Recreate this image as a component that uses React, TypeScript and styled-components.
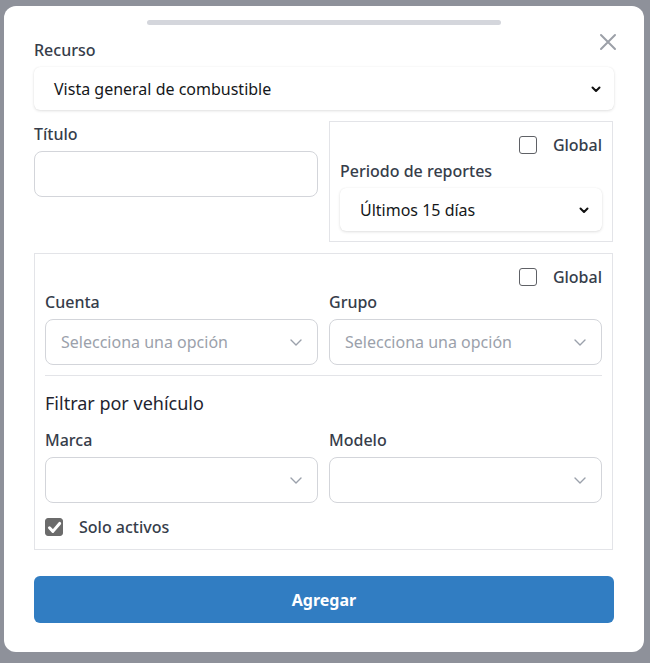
import React, { useState } from 'react';
import styled, { createGlobalStyle } from 'styled-components';

const GlobalStyle = createGlobalStyle`
  html, body {
    margin: 0;
    padding: 0;
    background: #8e919a;
    font-family: 'Noto Sans', 'Open Sans', Arial, sans-serif;
  }
  * {
    box-sizing: border-box;
  }
`;

const Backdrop = styled.div`
  min-height: 663px;
  padding: 6px 0 0 4px;
`;

const Modal = styled.div`
  position: relative;
  width: 640px;
  height: 646px;
  background: #ffffff;
  border-radius: 12px;
  padding: 14px 30px 30px;
  display: flex;
  flex-direction: column;
`;

const Handle = styled.div`
  width: 354px;
  height: 5px;
  flex-shrink: 0;
  border-radius: 3px;
  background: #d4d6dc;
  margin: 0 auto;
`;

const CloseButton = styled.button`
  position: absolute;
  top: 26px;
  right: 26px;
  width: 20px;
  height: 20px;
  padding: 0;
  border: none;
  background: none;
  cursor: pointer;
  display: flex;
  align-items: center;
  justify-content: center;
`;

const Label = styled.div<{ $top?: number }>`
  font-size: 16px;
  line-height: 24px;
  font-weight: 500;
  color: #363d4a;
  margin-top: ${(p) => p.$top ?? 0}px;
`;

const PlainSelect = styled.div`
  height: 43px;
  flex-shrink: 0;
  margin-top: 5px;
  padding: 0 12px 0 20px;
  border-radius: 6px;
  background: #fff;
  box-shadow: 0 1px 3px rgba(0, 0, 0, 0.12), 0 0 1px rgba(0, 0, 0, 0.08);
  display: flex;
  align-items: center;
  justify-content: space-between;
  font-size: 16px;
  color: #15171a;
`;

const Row = styled.div<{ $top: number }>`
  display: grid;
  grid-template-columns: 284px 1fr;
  column-gap: 11px;
  margin-top: ${(p) => p.$top}px;
`;

const InnerRow = styled.div<{ $top: number }>`
  display: grid;
  grid-template-columns: 1fr 1fr;
  column-gap: 11px;
  margin-top: ${(p) => p.$top}px;
`;

const Column = styled.div`
  display: flex;
  flex-direction: column;
`;

const TextInput = styled.input`
  height: 46px;
  margin-top: 5px;
  border: 1px solid #d3d5da;
  border-radius: 8px;
  padding: 0 14px;
  font-family: inherit;
  font-size: 16px;
  outline: none;
`;

const Box = styled.div<{ $top?: number }>`
  border: 1px solid #e3e4e8;
  padding: 11px 10px 10px;
  margin-top: ${(p) => p.$top ?? 0}px;
  margin-right: 1px;
  display: flex;
  flex-direction: column;
  flex-shrink: 0;
`;

const CheckRow = styled.label<{ $align?: 'start' | 'end'; $top?: number }>`
  display: flex;
  align-items: center;
  justify-content: ${(p) => (p.$align === 'start' ? 'flex-start' : 'flex-end')};
  gap: 16px;
  height: 24px;
  margin-top: ${(p) => p.$top ?? 0}px;
  font-size: 16px;
  font-weight: 500;
  color: #363d4a;
  cursor: pointer;
`;

const CheckBox = styled.span<{ $checked: boolean }>`
  width: 18px;
  height: 18px;
  border-radius: 3px;
  border: 1.5px solid ${(p) => (p.$checked ? '#6b6b6b' : '#5f6166')};
  background: ${(p) => (p.$checked ? '#6b6b6b' : '#fff')};
  display: flex;
  align-items: center;
  justify-content: center;
`;

const Dropdown = styled.div<{ $placeholder?: boolean }>`
  height: 46px;
  margin-top: 5px;
  border: 1px solid #d3d5da;
  border-radius: 8px;
  padding: 0 14px 0 15px;
  display: flex;
  align-items: center;
  justify-content: space-between;
  font-size: 16px;
  color: ${(p) => (p.$placeholder ? '#9ba1ab' : '#15171a')};
`;

const Divider = styled.hr`
  border: none;
  border-top: 1px solid #e3e4e8;
  margin: 10px 0 0;
`;

const SectionTitle = styled.div`
  font-size: 18px;
  line-height: 26px;
  color: #1f2430;
  margin-top: 14px;
`;

const SubmitButton = styled.button`
  margin-top: 26px;
  height: 47px;
  flex-shrink: 0;
  width: 100%;
  border: none;
  border-radius: 6px;
  background: #317dc2;
  color: #fff;
  font-family: inherit;
  font-size: 16px;
  font-weight: 700;
  cursor: pointer;
`;

const BoldChevron = () => (
  <svg width="12" height="12" viewBox="0 0 12 12" fill="none">
    <path d="M2.5 4.5L6 8l3.5-3.5" stroke="#111" strokeWidth="2" strokeLinecap="round" strokeLinejoin="round" />
  </svg>
);

const LightChevron = () => (
  <svg width="14" height="14" viewBox="0 0 14 14" fill="none">
    <path d="M2 5l5 5 5-5" stroke="#9ba1ab" strokeWidth="1.4" strokeLinecap="round" strokeLinejoin="round" />
  </svg>
);

const Check = ({ checked }: { checked: boolean }) => (
  <CheckBox $checked={checked}>
    {checked && (
      <svg width="15" height="15" viewBox="0 0 14 14" fill="none">
        <path d="M2.3 7.3l3.2 3.3L11.8 3.2" stroke="#fff" strokeWidth="2.8" strokeLinecap="round" strokeLinejoin="round" />
      </svg>
    )}
  </CheckBox>
);

export default function App() {
  const [globalPeriod, setGlobalPeriod] = useState(false);
  const [globalAccount, setGlobalAccount] = useState(false);
  const [onlyActive, setOnlyActive] = useState(true);

  return (
    <>
      <GlobalStyle />
      <Backdrop>
        <Modal>
          <Handle />
          <CloseButton aria-label="Cerrar">
            <svg width="18" height="18" viewBox="0 0 18 18" fill="none">
              <path d="M2 2l14 14M16 2L2 16" stroke="#9ca0a8" strokeWidth="2" strokeLinecap="round" />
            </svg>
          </CloseButton>

          <Label $top={13}>Recurso</Label>
          <PlainSelect>
            <span>Vista general de combustible</span>
            <BoldChevron />
          </PlainSelect>

          <Row $top={11}>
            <Column>
              <Label $top={1}>Título</Label>
              <TextInput />
            </Column>
            <Box>
              <CheckRow onClick={() => setGlobalPeriod(!globalPeriod)}>
                <Check checked={globalPeriod} />
                Global
              </CheckRow>
              <Label $top={2}>Periodo de reportes</Label>
              <PlainSelect>
                <span>Últimos 15 días</span>
                <BoldChevron />
              </PlainSelect>
            </Box>
          </Row>

          <Box $top={11}>
            <CheckRow onClick={() => setGlobalAccount(!globalAccount)}>
              <Check checked={globalAccount} />
              Global
            </CheckRow>
            <InnerRow $top={1}>
              <Column>
                <Label>Cuenta</Label>
                <Dropdown $placeholder>
                  <span>Selecciona una opción</span>
                  <LightChevron />
                </Dropdown>
              </Column>
              <Column>
                <Label>Grupo</Label>
                <Dropdown $placeholder>
                  <span>Selecciona una opción</span>
                  <LightChevron />
                </Dropdown>
              </Column>
            </InnerRow>
            <Divider />
            <SectionTitle>Filtrar por vehículo</SectionTitle>
            <InnerRow $top={12}>
              <Column>
                <Label>Marca</Label>
                <Dropdown>
                  <span />
                  <LightChevron />
                </Dropdown>
              </Column>
              <Column>
                <Label>Modelo</Label>
                <Dropdown>
                  <span />
                  <LightChevron />
                </Dropdown>
              </Column>
            </InnerRow>
            <CheckRow $align="start" $top={12} onClick={() => setOnlyActive(!onlyActive)}>
              <Check checked={onlyActive} />
              Solo activos
            </CheckRow>
          </Box>

          <SubmitButton>Agregar</SubmitButton>
        </Modal>
      </Backdrop>
    </>
  );
}
